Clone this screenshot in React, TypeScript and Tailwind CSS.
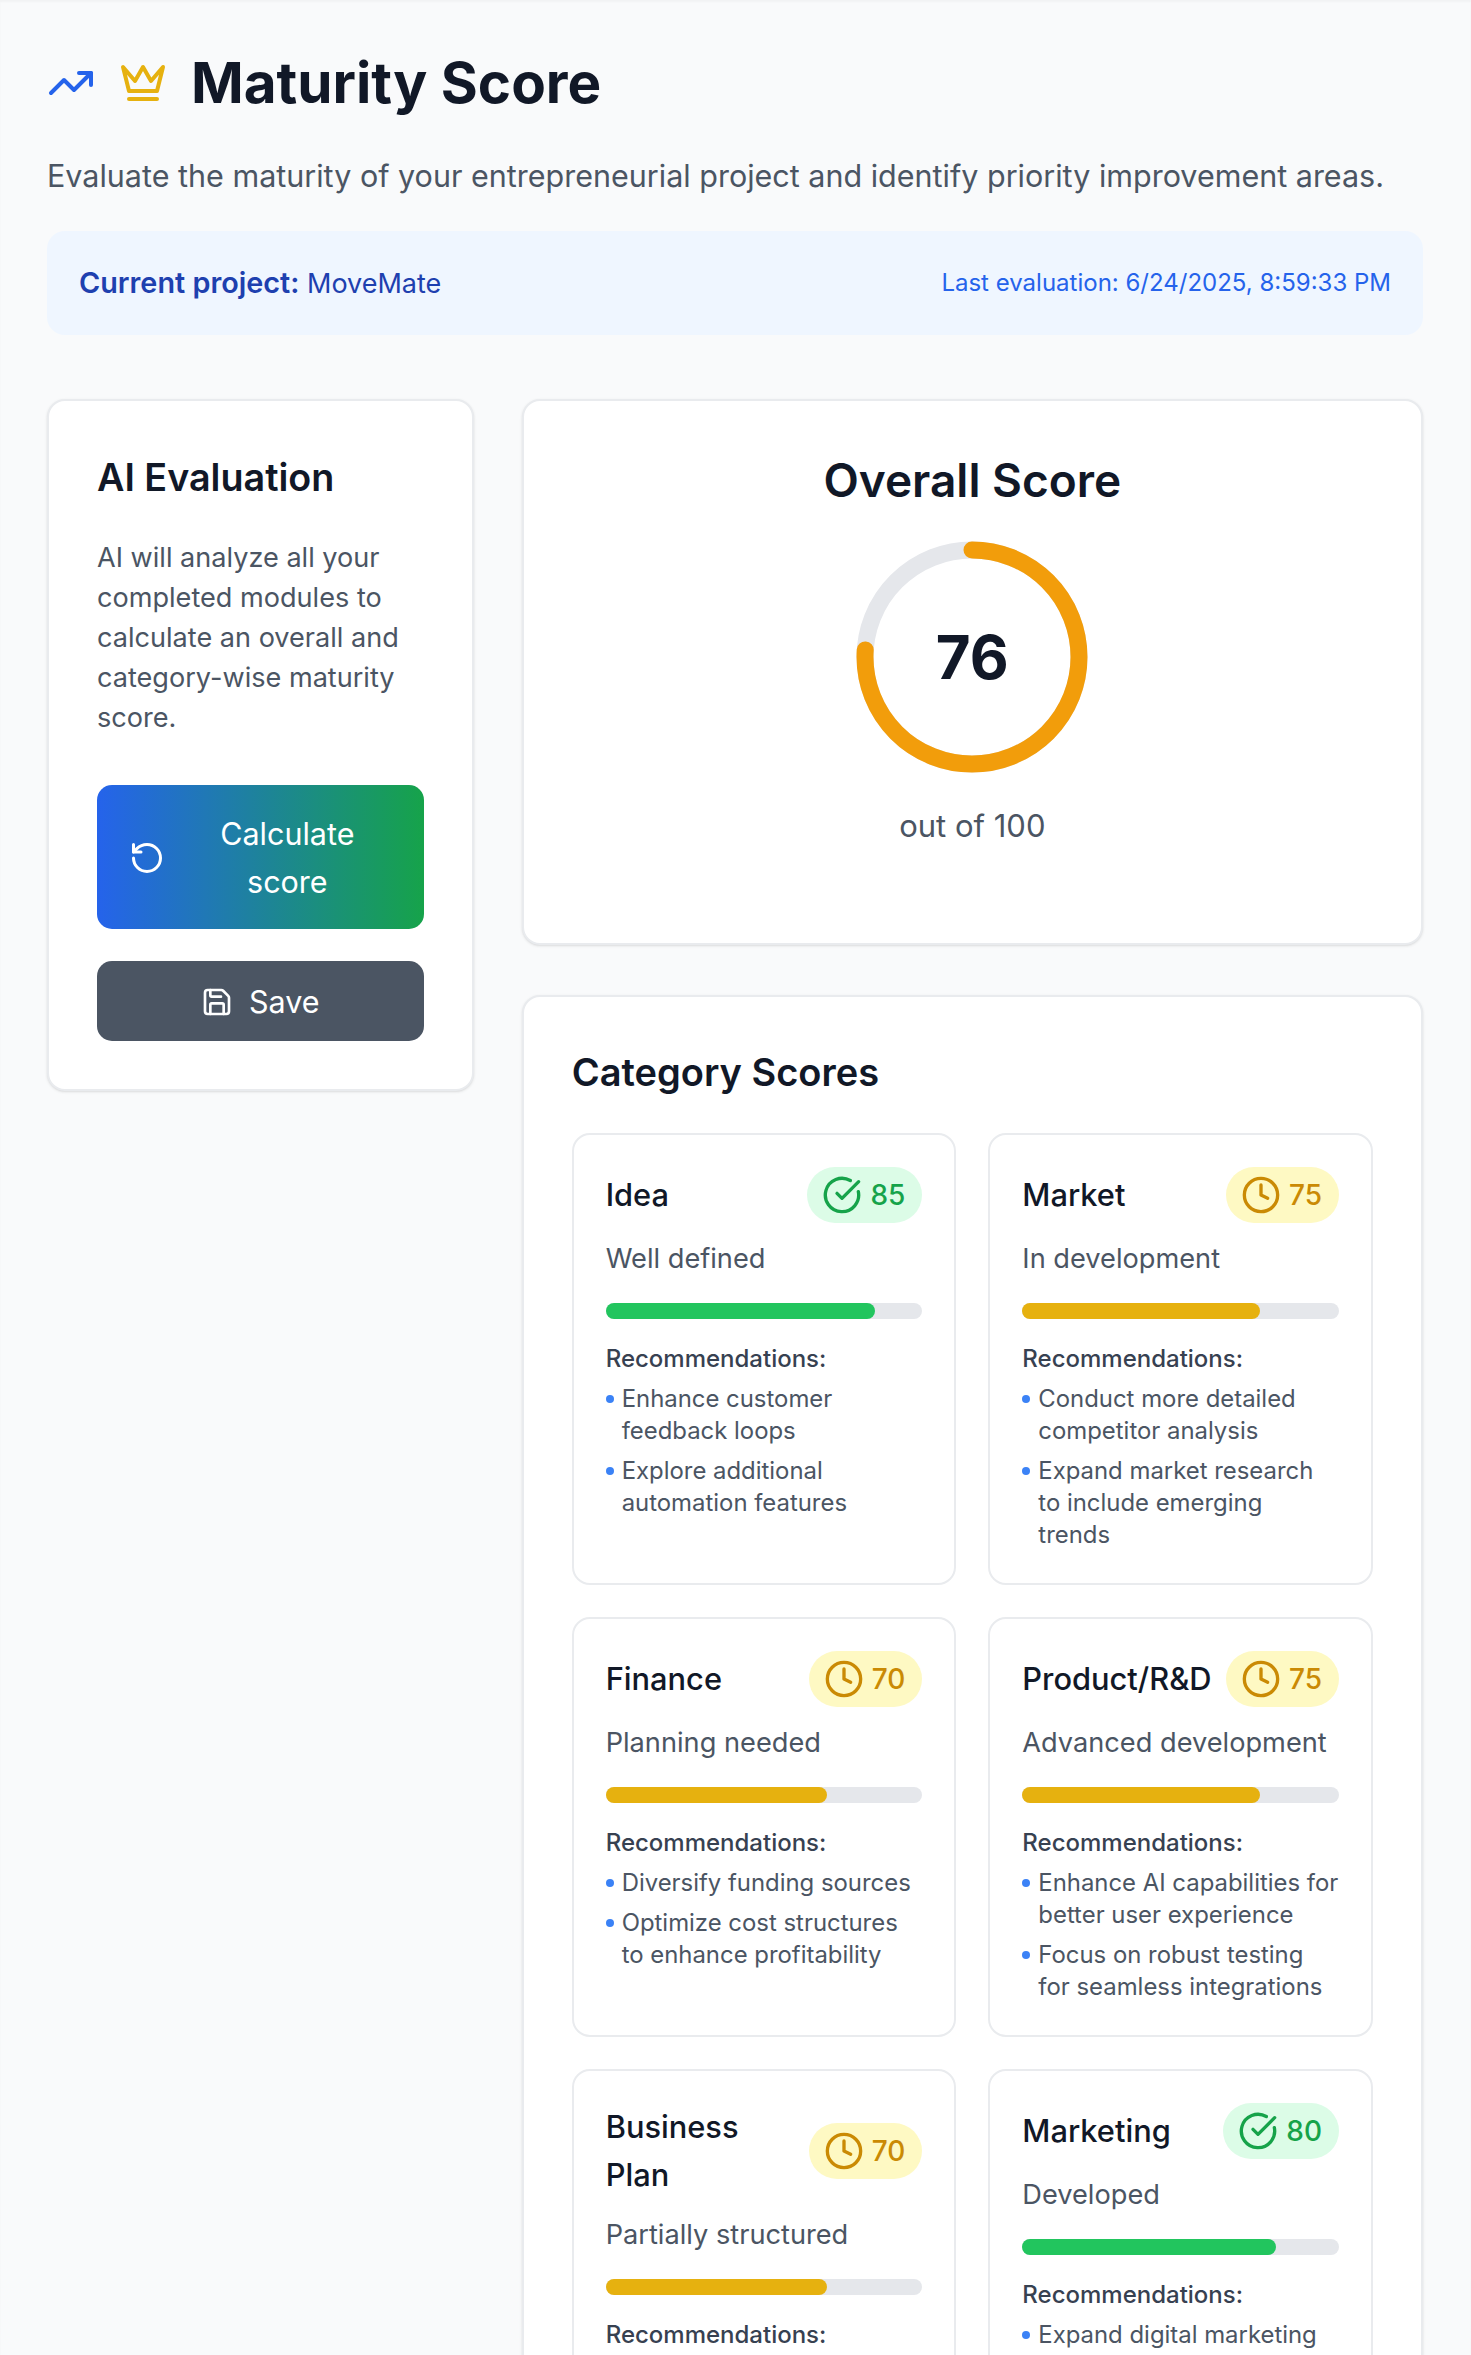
import { CheckCircle, Clock, RotateCcw, Save, TrendingUp } from 'lucide-react';

const CATEGORIES = [
  {
    name: 'Idea',
    score: 85,
    status: 'Well defined',
    recs: ['Enhance customer\nfeedback loops', 'Explore additional\nautomation features'],
  },
  {
    name: 'Market',
    score: 75,
    status: 'In development',
    recs: ['Conduct more detailed\ncompetitor analysis', 'Expand market research\nto include emerging\ntrends'],
  },
  {
    name: 'Finance',
    score: 70,
    status: 'Planning needed',
    recs: ['Diversify funding sources', 'Optimize cost structures\nto enhance profitability'],
  },
  {
    name: 'Product/R&D',
    score: 75,
    status: 'Advanced development',
    recs: ['Enhance AI capabilities for\nbetter user experience', 'Focus on robust testing\nfor seamless integrations'],
  },
  { name: 'Business Plan', score: 70, status: 'Partially structured', recs: [] },
  { name: 'Marketing', score: 80, status: 'Developed', recs: ['Expand digital marketing'] },
];

function CrownIcon() {
  return (
    <svg
      width="48"
      height="48"
      viewBox="0 0 24 24"
      fill="none"
      stroke="currentColor"
      strokeWidth="2"
      strokeLinecap="round"
      strokeLinejoin="round"
      className="mr-6 text-[#e6b10f]"
    >
      <path d="m2 4 3 12h14l3-12-6 7-4-7-4 7-6-7z" />
      <path d="M5 20h14" />
    </svg>
  );
}

function CategoryCard({ name, score, status, recs }: (typeof CATEGORIES)[number]) {
  const good = score >= 80;
  return (
    <div className="rounded-[18px] border-2 border-[#e9ebee] bg-white p-8">
      <div className="mb-[17px] flex items-center justify-between gap-3">
        <h3 className="text-[30.8px] leading-[48px] font-medium text-[#111827]">{name}</h3>
        <div
          className={`flex shrink-0 items-center gap-2 rounded-full py-2 pr-[17px] pl-[15px] ${
            good ? 'bg-[#dcfce7] text-[#16a34a]' : 'bg-[#fef9c3] text-[#ca8a04]'
          }`}
        >
          {good ? <CheckCircle size={40} /> : <Clock size={40} />}
          <span className="text-[28px] leading-[40px] font-medium">{score}</span>
        </div>
      </div>
      <p className="mb-[25px] text-[27.2px] leading-[38px] text-[#4b5563]">{status}</p>
      <div className="mb-6 h-4 w-full rounded-full bg-[#e5e7eb]">
        <div
          className={`h-4 rounded-full ${good ? 'bg-[#22c55e]' : 'bg-[#e6b10f]'}`}
          style={{ width: `${score}%` }}
        />
      </div>
      <p className="mb-2 text-[24px] leading-[32px] font-medium text-[#374151]">Recommendations:</p>
      <ul className="flex flex-col gap-2">
        {recs.map((rec) => (
          <li key={rec} className="flex gap-2 text-[23.9px] leading-[32px] whitespace-pre text-[#4b5563]">
            <span className="mt-3 h-2 w-2 shrink-0 rounded-full bg-[#3b82f6]" />
            {rec}
          </li>
        ))}
      </ul>
    </div>
  );
}

export default function App() {
  const radius = 107;
  const circumference = 2 * Math.PI * radius;

  return (
    <main className="h-[2355px] overflow-hidden bg-[#f9fafb] pt-[53px] pr-12 pl-[47px] font-['Inter',sans-serif] shadow-[inset_0_2px_2px_rgba(0,0,0,0.03)]">
      <div className="mb-[42px] flex h-[60px] items-center">
        <TrendingUp size={48} className="mr-6 text-[#2563eb]" />
        <CrownIcon />
        <h1 className="text-[56.6px] leading-[60px] font-bold text-[#111827]">Maturity Score</h1>
      </div>
      <p className="mb-[34px] text-[30.5px] leading-[42px] text-[#4b5563]">
        Evaluate the maturity of your entrepreneurial project and identify priority improvement areas.
      </p>

      <div className="mb-16 flex h-[104px] items-center justify-between rounded-[18px] bg-[#eff6ff] px-8">
        <p className="text-[27px] text-[#1e40af]">
          <span className="text-[28.8px] font-semibold">Current project:</span> MoveMate
        </p>
        <p className="text-[24px] text-[#2563eb]">Last evaluation: 6/24/2025, 8:59:33 PM</p>
      </div>

      <div className="grid grid-cols-3 gap-12">
        <aside className="self-start rounded-[18px] border-2 border-[#e9ebee] bg-white p-12 shadow-sm">
          <h2 className="mb-[33px] text-[37.7px] leading-[56px] font-semibold text-[#111827]">AI Evaluation</h2>
          <p className="mb-[47px] text-[27.1px] leading-[40px] text-[#4b5563]">
            AI will analyze all your completed modules to calculate an overall and category-wise maturity score.
          </p>
          <button className="mb-8 flex h-[144px] w-full items-center gap-[18px] rounded-[15px] bg-linear-to-r/srgb from-[#2563eb] to-[#16a34a] px-8 pt-0.5 text-white">
            <RotateCcw size={36} className="shrink-0" />
            <span className="flex-1 text-center text-[30.5px] leading-[48px]">Calculate score</span>
          </button>
          <button className="flex h-20 w-full items-center justify-center gap-4 rounded-[15px] bg-[#4b5563] pt-0.5 text-[30.5px] text-white">
            <Save size={32} />
            Save
          </button>
        </aside>

        <div className="col-span-2 flex flex-col gap-[50px]">
          <section className="flex flex-col items-center rounded-[18px] border-2 border-[#e9ebee] bg-white px-12 pt-12 pb-[97px] shadow-sm">
            <h2 className="mb-[25.5px] text-[46px] leading-[62px] font-semibold text-[#111827]">Overall Score</h2>
            <div className="relative h-[240px] w-[240px]">
              <svg width="240" height="240" viewBox="0 0 240 240" className="-rotate-90">
                <circle cx="120" cy="120" r={radius} fill="none" stroke="#e5e7eb" strokeWidth="17" />
                <circle
                  cx="120"
                  cy="120"
                  r={radius}
                  fill="none"
                  stroke="#f29d0b"
                  strokeWidth="17"
                  strokeLinecap="round"
                  strokeDasharray={`${circumference * 0.76} ${circumference}`}
                />
              </svg>
              <span className="absolute inset-0 flex items-center justify-center text-[60px] font-bold text-[#111827]">
                76
              </span>
            </div>
            <p className="mt-[29px] text-[31px] leading-[40px] text-[#4b5563]">out of 100</p>
          </section>

          <section className="rounded-[18px] border-2 border-[#e9ebee] bg-white p-12 shadow-sm">
            <h2 className="mb-[34px] text-[38px] leading-[54px] font-semibold text-[#111827]">Category Scores</h2>
            <div className="grid grid-cols-2 gap-8">
              {CATEGORIES.map((category) => (
                <CategoryCard key={category.name} {...category} />
              ))}
            </div>
          </section>
        </div>
      </div>
    </main>
  );
}
